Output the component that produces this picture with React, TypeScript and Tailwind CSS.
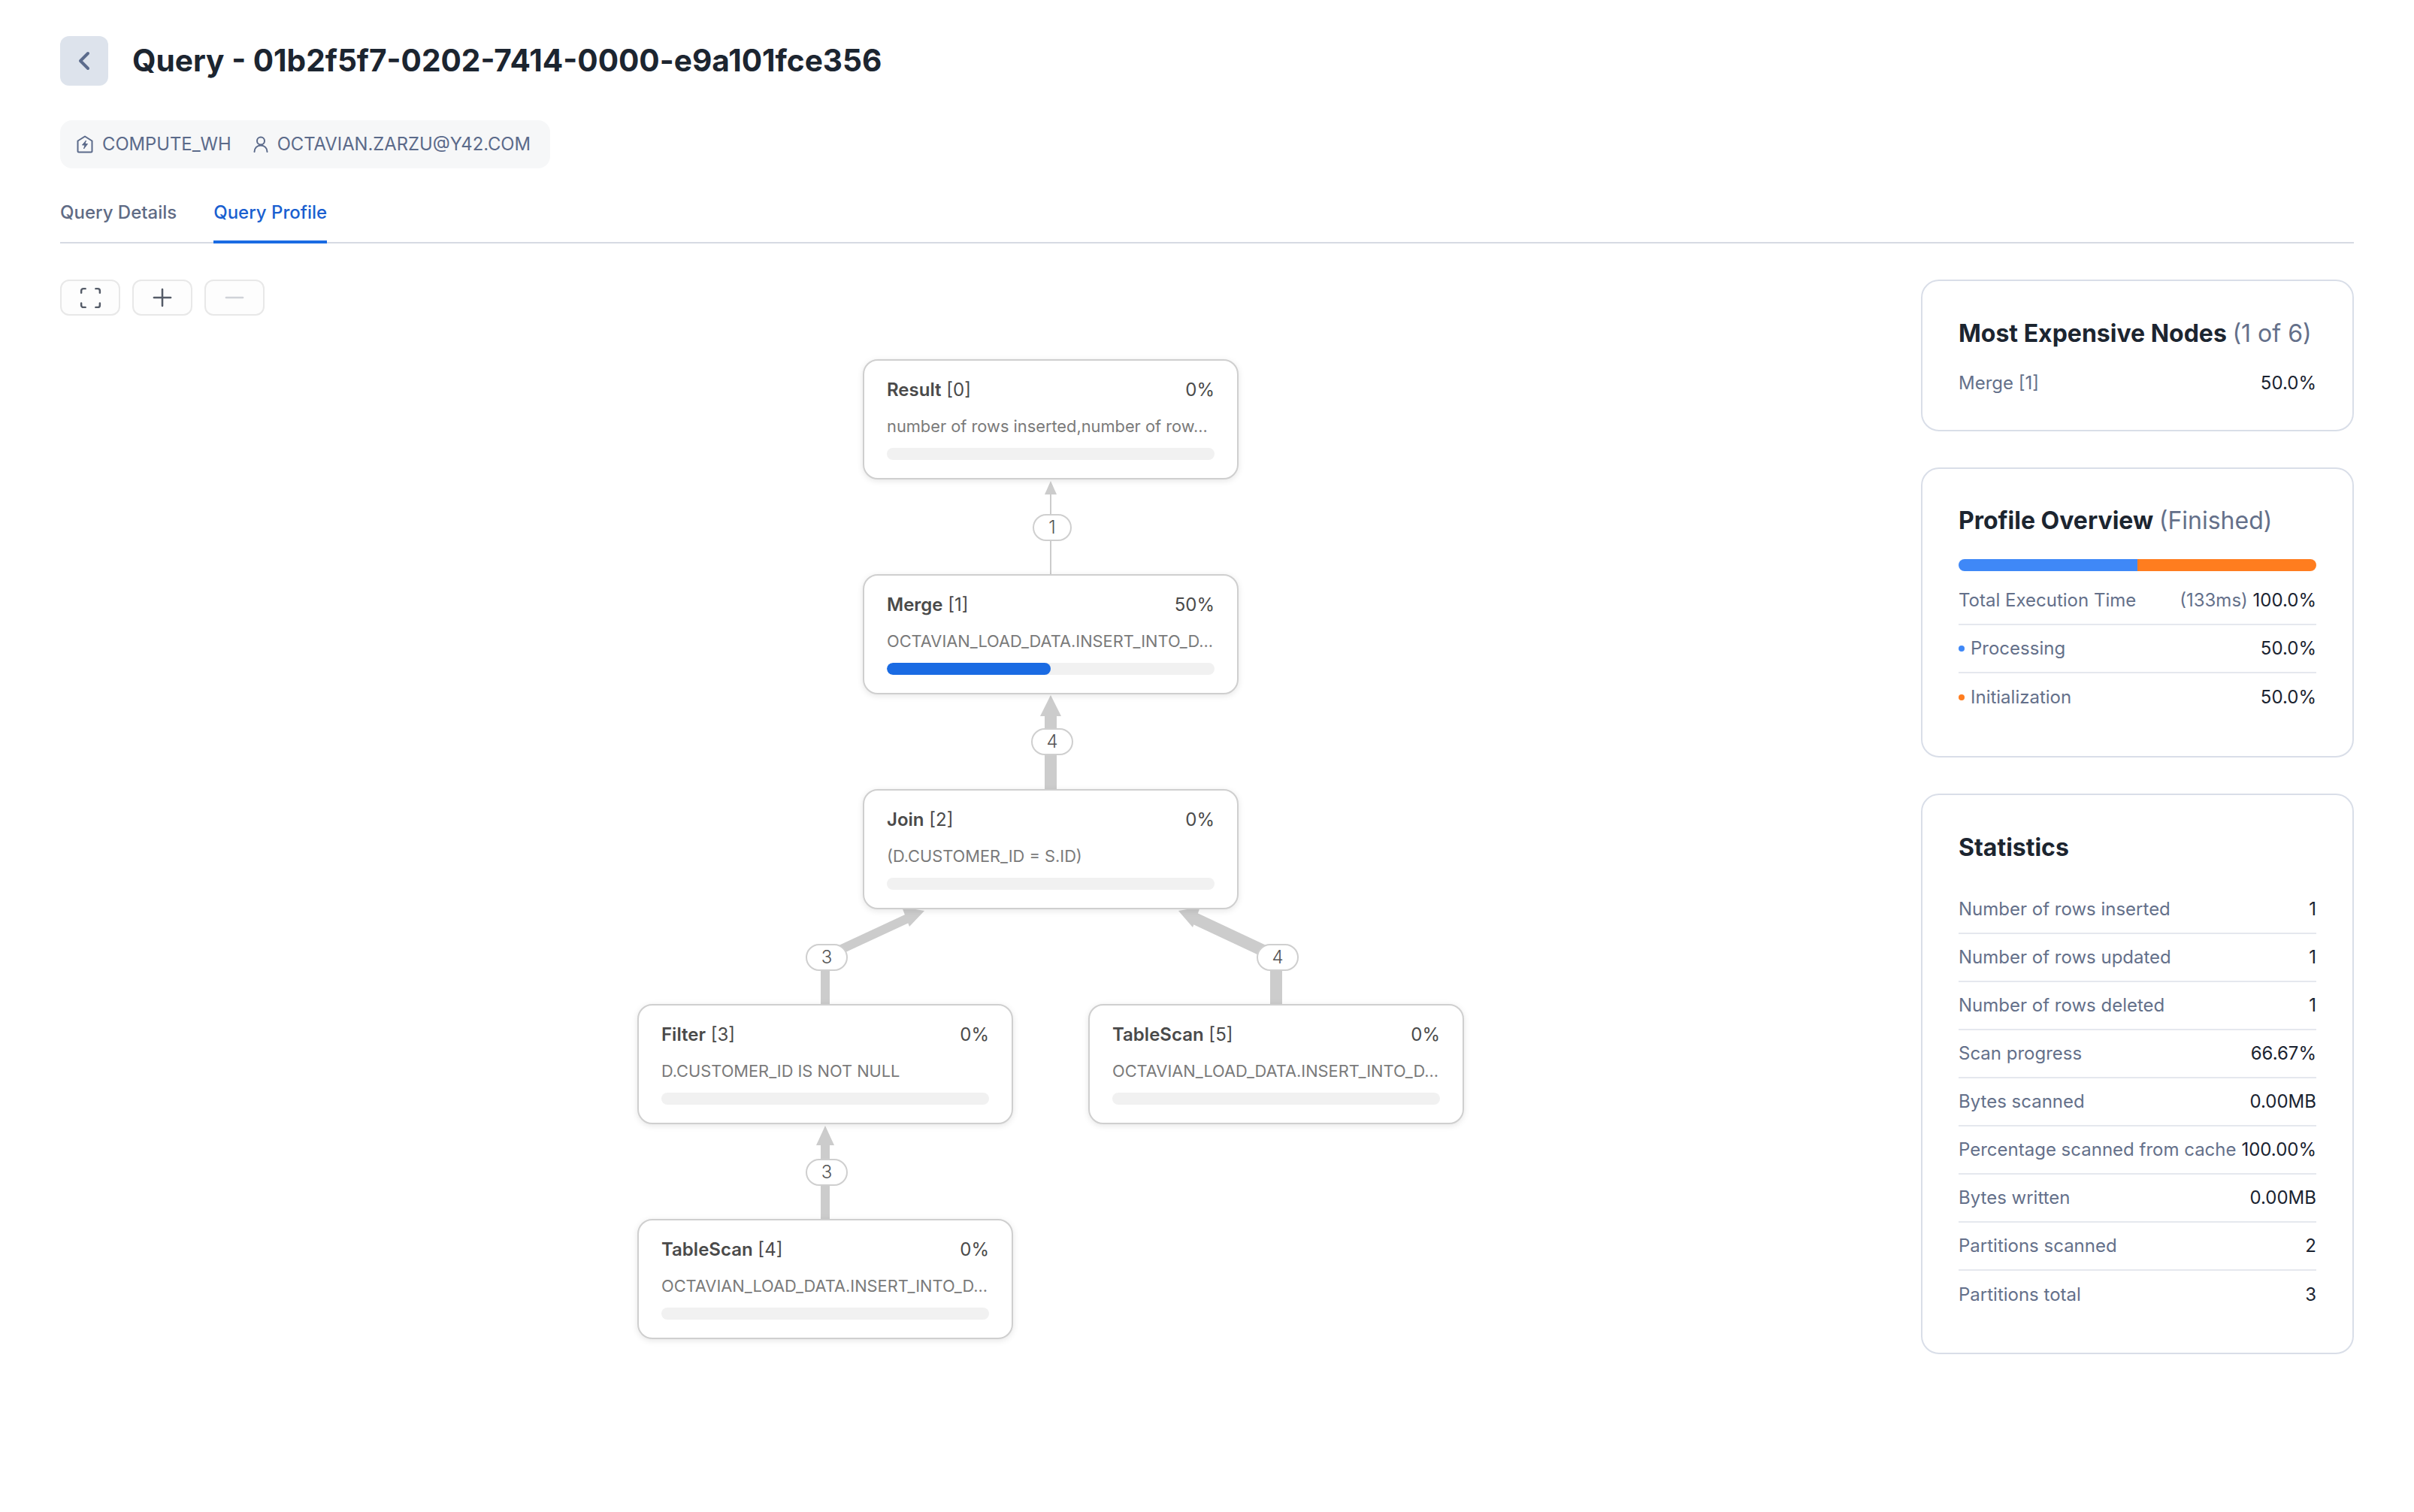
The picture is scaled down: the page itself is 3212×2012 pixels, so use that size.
import { ChevronLeft, Minus, Plus, Scan } from "lucide-react";

const font = "font-['Inter',sans-serif]";

type GraphNode = { name: string; id: number; pct: number; desc: string; x: number; y: number };

const nodes: GraphNode[] = [
  { name: "Result", id: 0, pct: 0, desc: "number of rows inserted,number of row...", x: 1068, y: 106 },
  { name: "Merge", id: 1, pct: 50, desc: "OCTAVIAN_LOAD_DATA.INSERT_INTO_D...", x: 1068, y: 392 },
  { name: "Join", id: 2, pct: 0, desc: "(D.CUSTOMER_ID = S.ID)", x: 1068, y: 678 },
  { name: "Filter", id: 3, pct: 0, desc: "D.CUSTOMER_ID IS NOT NULL", x: 768, y: 964 },
  { name: "TableScan", id: 5, pct: 0, desc: "OCTAVIAN_LOAD_DATA.INSERT_INTO_D...", x: 1368, y: 964 },
  { name: "TableScan", id: 4, pct: 0, desc: "OCTAVIAN_LOAD_DATA.INSERT_INTO_D...", x: 768, y: 1250 },
];

const edgeLabels = [
  { text: "1", x: 1294, y: 312, w: 52 },
  { text: "4", x: 1292, y: 597, w: 56 },
  { text: "3", x: 992, y: 884, w: 56 },
  { text: "4", x: 1592, y: 884, w: 56 },
  { text: "3", x: 992, y: 1170, w: 56 },
];

const stats = [
  ["Number of rows inserted", "1"],
  ["Number of rows updated", "1"],
  ["Number of rows deleted", "1"],
  ["Scan progress", "66.67%"],
  ["Bytes scanned", "0.00MB"],
  ["Percentage scanned from cache", "100.00%"],
  ["Bytes written", "0.00MB"],
  ["Partitions scanned", "2"],
  ["Partitions total", "3"],
];

function NodeCard({ node }: { node: GraphNode }) {
  return (
    <div
      className="absolute flex h-[160px] w-[500px] flex-col rounded-[20px] border-2 border-[#cfcfcf] bg-white px-[30px] pt-[24px] shadow-[0_2px_8px_rgba(0,0,0,0.1)]"
      style={{ left: node.x, top: node.y }}
    >
      <div className="flex h-[30px] items-center justify-between text-[24px] text-[#4a4a4a]">
        <span>
          <span className="font-semibold">{node.name}</span> [{node.id}]
        </span>
        <span>{node.pct}%</span>
      </div>
      <div className="mt-[18px] h-[30px] whitespace-nowrap text-[21.8px] leading-[30px] text-[#7a7a7a]">{node.desc}</div>
      <div className="mt-[14px] h-[16px] w-full overflow-hidden rounded-full bg-[#f1f1f1]">
        {node.pct > 0 && <div className="h-full rounded-full bg-[#1a6be3]" style={{ width: `${node.pct}%` }} />}
      </div>
    </div>
  );
}

function Edges() {
  return (
    <svg className="absolute left-0 top-0" width="2000" height="1400" fill="none">
      <g stroke="#cccccc">
        <path d="M1318 392V284" strokeWidth="2" />
        <path d="M1318 678V578" strokeWidth="16" />
        <path d="M1018 964V901L1130 849" strokeWidth="12" />
        <path d="M1618 964V901L1505 848" strokeWidth="16" />
        <path d="M1018 1250V1150" strokeWidth="12" />
      </g>
      <g fill="#cccccc">
        <path d="M1318 268L1326 286H1310Z" />
        <path d="M1318 553L1332 581H1304Z" />
        <path d="M1150 840L1130 861L1120 835Z" />
        <path d="M1488 840L1507 862L1517 835Z" />
        <path d="M1018 1126L1030 1152H1006Z" />
      </g>
    </svg>
  );
}

function Card({ className, children }: { className?: string; children: React.ReactNode }) {
  return <div className={`rounded-[24px] border-2 border-[#d9dee8] bg-white px-[48px] ${className}`}>{children}</div>;
}

function Row({ label, value, last }: { label: React.ReactNode; value: React.ReactNode; last?: boolean }) {
  return (
    <div className={`flex h-[64px] items-center justify-between text-[24px] ${last ? "" : "border-b-2 border-[#e5e8ee]"}`}>
      <span className="text-[#64708a]">{label}</span>
      <span className="text-[#1a2330]">{value}</span>
    </div>
  );
}

export default function App() {
  return (
    <div className={`${font} min-h-screen bg-white px-[80px] pt-[48px]`}>
      <div className="flex items-center gap-[32px]">
        <button className="flex h-[66px] w-[64px] items-center justify-center rounded-[12px] bg-[#dde3ec] text-[#5b6b8c]">
          <ChevronLeft size={40} strokeWidth={2.4} />
        </button>
        <h1 className="text-[40.6px] font-bold text-[#1c2530]">Query - 01b2f5f7-0202-7414-0000-e9a101fce356</h1>
      </div>

      <div className="mt-[46px] flex h-[64px] w-fit items-center gap-[29px] rounded-[16px] bg-[#f6f7f8] pl-[22px] pr-[26px] text-[23.8px] text-[#5b6a8a]">
        <span className="flex items-center gap-[12px]">
          <svg width="22" height="24" viewBox="0 0 22 24" fill="none" stroke="currentColor" strokeWidth="2" strokeLinejoin="round">
            <path d="M1.5 7.5L11 1.5l9.5 6V21a1.5 1.5 0 0 1-1.5 1.5H3A1.5 1.5 0 0 1 1.5 21z" />
            <path d="M12.5 7L7.5 13h3.5l-1.5 5 5-6.5H11z" fill="currentColor" strokeWidth="1" />
          </svg>
          COMPUTE_WH
        </span>
        <span className="flex items-center gap-[12px]">
          <svg width="20" height="22" viewBox="0 0 20 22" fill="none" stroke="currentColor" strokeWidth="2" strokeLinecap="round">
            <circle cx="10" cy="6.5" r="5" />
            <path d="M1.5 21c0-5 3.5-8.5 8.5-8.5s8.5 3.5 8.5 8.5" />
          </svg>
          OCTAVIAN.ZARZU@Y42.COM
        </span>
      </div>

      <div className="mt-[32px] flex gap-[49px] border-b-2 border-[#d6dae3] text-[24px] font-medium">
        <div className="-mb-[2px] flex h-[68px] items-start pt-[9px] text-[#5f6b85]">Query Details</div>
        <div className="-mb-[2px] flex h-[68px] items-start border-b-4 border-[#1a6be3] pt-[9px] text-[#1a5fd0]">Query Profile</div>
      </div>

      <div className="mt-[48px] flex justify-between">
        <div className="relative h-[1440px] w-[2400px]">
          <div className="flex gap-[16px]">
            <button className="flex h-[48px] w-[80px] items-center justify-center rounded-[12px] border-2 border-[#e8e8e8] bg-[#fdfdfd] text-[#555c68]">
              <Scan size={33} strokeWidth={1.8} />
            </button>
            <button className="flex h-[48px] w-[80px] items-center justify-center rounded-[12px] border-2 border-[#e8e8e8] bg-[#fdfdfd] text-[#555c68]">
              <Plus size={38} strokeWidth={1.6} />
            </button>
            <button className="flex h-[48px] w-[80px] items-center justify-center rounded-[12px] border-2 border-[#e8e8e8] bg-[#fdfdfd] text-[#d0d3d8]">
              <Minus size={38} strokeWidth={1.6} />
            </button>
          </div>
          <Edges />
          {nodes.map((n) => (
            <NodeCard key={n.id} node={n} />
          ))}
          {edgeLabels.map((l, i) => (
            <div
              key={i}
              className="absolute flex h-[36px] items-center justify-center rounded-[18px] border-2 border-[#cfcfcf] bg-white text-[24px] font-light text-[#555555]"
              style={{ left: l.x, top: l.y, width: l.w }}
            >
              {l.text}
            </div>
          ))}
        </div>

        <div className="flex w-[576px] flex-col gap-[48px]">
          <Card className="h-[202px] pt-[50px]">
            <h2 className="text-[32px] font-bold leading-[40px] text-[#1c2530]">
              Most Expensive Nodes <span className="font-normal text-[#64708a]">(1 of 6)</span>
            </h2>
            <div className="mt-[14px]">
              <Row label="Merge [1]" value="50.0%" last />
            </div>
          </Card>

          <Card className="h-[386px] pt-[49px]">
            <h2 className="text-[32px] font-bold leading-[40px] text-[#1c2530]">
              Profile Overview <span className="font-normal text-[#64708a]">(Finished)</span>
            </h2>
            <div className="mt-[31px] flex h-[16px] overflow-hidden rounded-full">
              <div className="w-1/2 bg-[#3f88f7]" />
              <div className="w-1/2 bg-[#ff7d1f]" />
            </div>
            <div className="mt-[8px]">
              <Row
                label="Total Execution Time"
                value={
                  <>
                    <span className="text-[#64708a]">(133ms)</span> 100.0%
                  </>
                }
              />
              <Row
                label={
                  <span className="flex items-center gap-[8px]">
                    <span className="h-[8px] w-[8px] rounded-full bg-[#3f88f7]" />
                    Processing
                  </span>
                }
                value="50.0%"
              />
              <Row
                label={
                  <span className="flex items-center gap-[8px]">
                    <span className="h-[8px] w-[8px] rounded-full bg-[#ff7d1f]" />
                    Initialization
                  </span>
                }
                value="50.0%"
                last
              />
            </div>
          </Card>

          <Card className="h-[746px] pt-[50px]">
            <h2 className="text-[32px] font-bold leading-[40px] text-[#1c2530]">Statistics</h2>
            <div className="mt-[31px]">
              {stats.map(([label, value], i) => (
                <Row key={label} label={label} value={value} last={i === stats.length - 1} />
              ))}
            </div>
          </Card>
        </div>
      </div>
    </div>
  );
}
